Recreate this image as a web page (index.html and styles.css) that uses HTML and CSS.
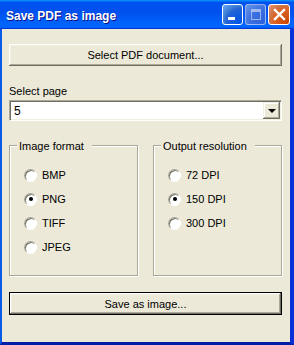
FILE: index.html
```html
<!DOCTYPE html>
<html>
<head>
    <title>Save PDF as image</title>
    <link rel="stylesheet" href="styles.css">
</head>
<body>
    <div class="window">
        <div class="titlebar">
            <span class="title">Save PDF as image</span>
            <div class="controls">
                <span class="ctl min"><span class="min-bar"></span></span>
                <span class="ctl max"><span class="max-box"></span></span>
                <span class="ctl close">
                    <svg width="19" height="19" viewBox="0 0 19 19">
                        <path d="M5 5 L14 14 M14 5 L5 14" stroke="#fff" stroke-width="2.4" stroke-linecap="square"/>
                    </svg>
                </span>
            </div>
        </div>
        <div class="frame">
            <button class="btn select-btn">Select PDF document...</button>
            <div class="field-label">Select page</div>
            <div class="combo">
                <span class="combo-value">5</span>
                <span class="combo-arrow"><span class="tri"></span></span>
            </div>
            <div class="groups">
                <div class="group">
                    <span class="legend">Image format</span>
                    <div class="radio"><span class="dot"></span>BMP</div>
                    <div class="radio"><span class="dot checked"></span>PNG</div>
                    <div class="radio"><span class="dot"></span>TIFF</div>
                    <div class="radio"><span class="dot"></span>JPEG</div>
                </div>
                <div class="group">
                    <span class="legend">Output resolution</span>
                    <div class="radio"><span class="dot"></span>72 DPI</div>
                    <div class="radio"><span class="dot checked"></span>150 DPI</div>
                    <div class="radio"><span class="dot"></span>300 DPI</div>
                </div>
            </div>
            <button class="btn save-btn">Save as image...</button>
        </div>
    </div>
</body>
</html>
```

FILE: styles.css
```css
body {
    margin: 0;
    font-family: "Liberation Sans", Arial, sans-serif;
    font-size: 11px;
    color: #000;
    background-color: #ece9d8;
}
.window {
    width: 294px;
    height: 345px;
    display: flex;
    flex-direction: column;
}
.titlebar {
    height: 29px;
    flex-shrink: 0;
    display: flex;
    align-items: flex-start;
    justify-content: space-between;
    background: linear-gradient(180deg, #0997ff, #0053ee 8%, #0050ee 40%, #0066ff 88%, #0066ff 93%, #005bff 95%, #003dd7 96%, #003dd7);
}
.title {
    margin: 9px 0 0 6px;
    line-height: 14px;
    font-size: 12px;
    font-weight: bold;
    color: #fff;
    text-shadow: 1px 1px #0f1089;
}
.controls {
    display: flex;
    gap: 2px;
    margin: 4px 4px 0 0;
}
.ctl {
    width: 21px;
    height: 21px;
    box-sizing: border-box;
    border: 1px solid #fff;
    border-radius: 3px;
    position: relative;
    display: flex;
    align-items: center;
    justify-content: center;
}
.ctl.min {
    background: radial-gradient(circle at 90% 90%, #0054e9 0%, #2263d5 55%, #4282d6 70%, #5a9bf2 90%, #6ea4f5 100%);
}
.ctl.max {
    border-color: rgba(255, 255, 255, 0.45);
    background: radial-gradient(circle at 90% 90%, #2d63de 0%, #3d70e0 55%, #5283e3 75%, #6a96ea 100%);
}
.ctl.close {
    width: 22px;
    background: radial-gradient(circle at 90% 90%, #cc4600 0%, #dc6527 55%, #cd7546 70%, #e88a66 90%, #f0a080 100%);
}
.min-bar {
    position: absolute;
    left: 5px;
    top: 12px;
    width: 7px;
    height: 3px;
    background-color: #fff;
}
.max-box {
    width: 8px;
    height: 7px;
    border: 1px solid rgba(255, 255, 255, 0.5);
    border-top-width: 3px;
}
.frame {
    flex-grow: 1;
    display: flex;
    flex-direction: column;
    padding: 15px 8px 0 7px;
    border-left: 2px solid #0a5ae8;
    border-right: 4px solid #0831d9;
    border-bottom: 3px solid #001ea8;
}
.btn {
    height: 22px;
    padding: 0;
    border: none;
    background-color: #ece9d8;
    font-family: "Liberation Sans", Arial, sans-serif;
    font-size: 11px;
    color: #000;
    box-shadow: inset -1px -1px #716f64, inset 1px 1px #fff, inset -2px -2px #aca899, inset 2px 2px #f1efe2;
}
.save-btn {
    height: 23px;
    margin-top: 16px;
    border: 1px solid #000;
}
.field-label {
    margin-top: 19px;
    line-height: 13px;
}
.combo {
    margin-top: 2px;
    height: 21px;
    box-sizing: border-box;
    display: flex;
    align-items: center;
    background-color: #fff;
    border: 1px solid;
    border-color: #aca899 #fff #fff #aca899;
    box-shadow: inset 1px 1px #716f64, inset -1px -1px #f1efe2;
    padding: 1px 1px 1px 4px;
}
.combo-value {
    flex-grow: 1;
    font-size: 12px;
}
.combo-arrow {
    width: 17px;
    height: 17px;
    display: flex;
    align-items: center;
    justify-content: center;
    background-color: #ece9d8;
    box-shadow: inset -1px -1px #716f64, inset 1px 1px #f1efe2, inset -2px -2px #aca899, inset 2px 2px #fff;
}
.tri {
    width: 0;
    height: 0;
    border-left: 4px solid transparent;
    border-right: 4px solid transparent;
    border-top: 4px solid #000;
}
.groups {
    margin-top: 24px;
    display: flex;
    gap: 15px;
}
.group {
    position: relative;
    width: 129px;
    height: 131px;
    box-sizing: border-box;
    padding: 17px 0 0 14px;
    border: 1px solid #aca899;
    box-shadow: inset 1px 1px #fff, 1px 1px #fff;
}
.legend {
    position: absolute;
    top: -6px;
    left: 7px;
    padding: 0 8px 0 2px;
    line-height: 13px;
    background-color: #ece9d8;
}
.radio {
    height: 24px;
    display: flex;
    align-items: center;
    gap: 5px;
}
.dot {
    width: 13px;
    height: 13px;
    box-sizing: border-box;
    border-radius: 50%;
    border: 1px solid;
    border-color: #aca899 #fff #fff #aca899;
    box-shadow: inset 1px 1px #716f64;
    background-color: #fff;
    display: flex;
    align-items: center;
    justify-content: center;
}
.dot.checked::after {
    content: "";
    width: 4px;
    height: 4px;
    border-radius: 50%;
    background-color: #000;
}
```
